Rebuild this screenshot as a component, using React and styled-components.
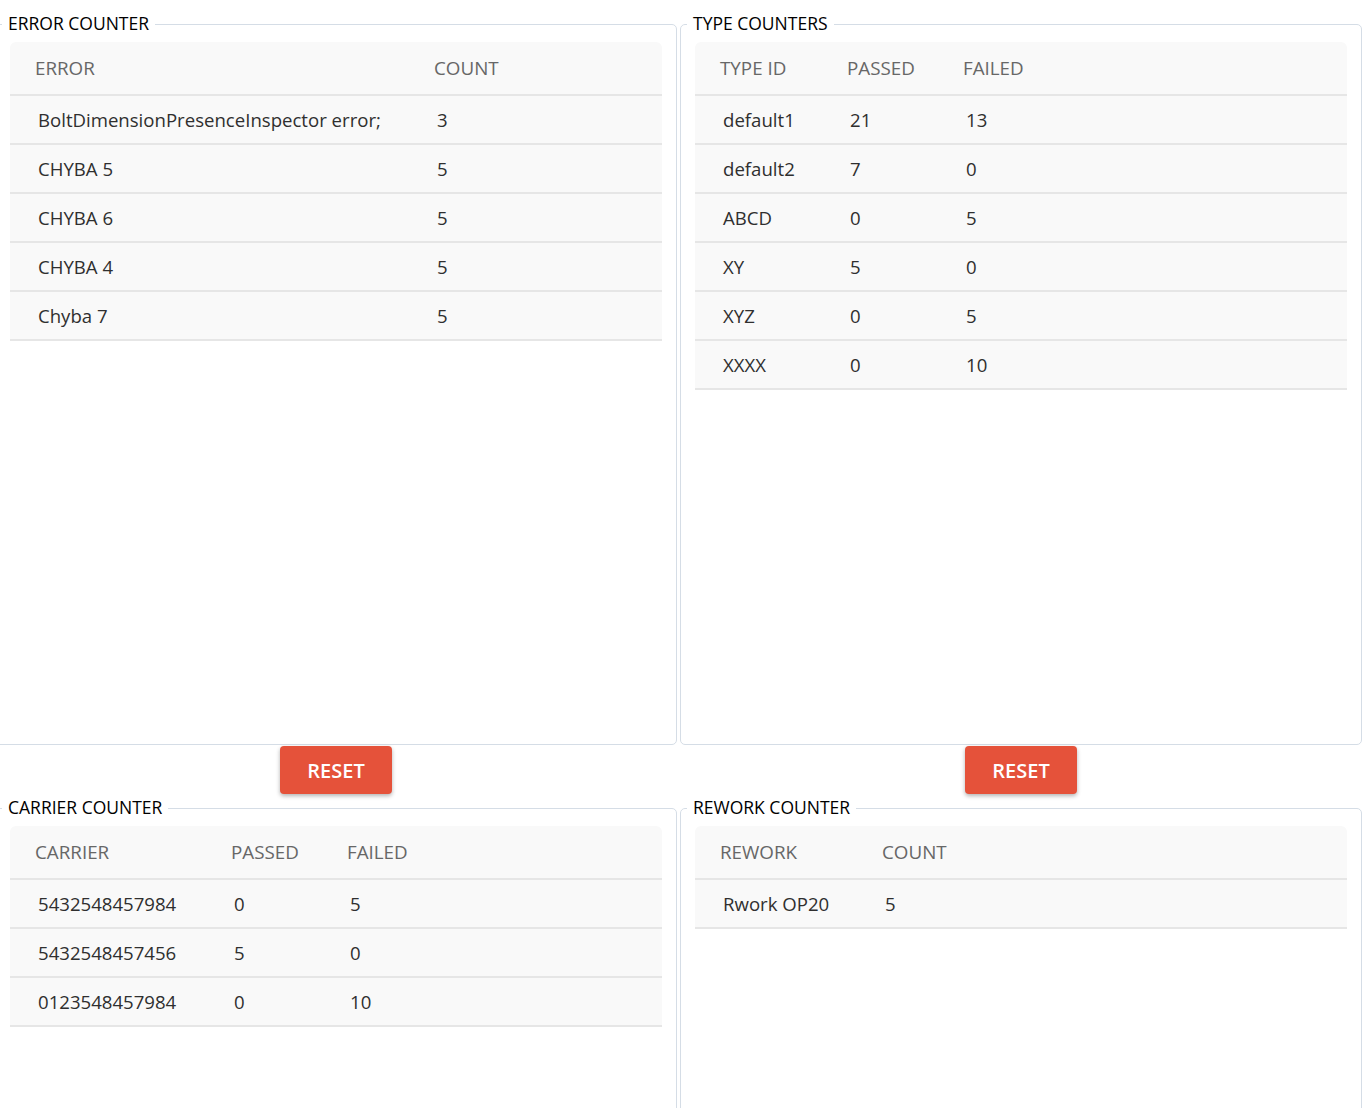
import React from "react"
import styled, { createGlobalStyle } from "styled-components"

const errors = [
  ["BoltDimensionPresenceInspector error;", "3"],
  ["CHYBA 5", "5"],
  ["CHYBA 6", "5"],
  ["CHYBA 4", "5"],
  ["Chyba 7", "5"],
]
const types = [
  ["default1", "21", "13"],
  ["default2", "7", "0"],
  ["ABCD", "0", "5"],
  ["XY", "5", "0"],
  ["XYZ", "0", "5"],
  ["XXXX", "0", "10"],
]
const carriers = [
  ["5432548457984", "0", "5"],
  ["5432548457456", "5", "0"],
  ["0123548457984", "0", "10"],
]
const reworks = [["Rwork OP20", "5"]]

function CounterTable({ cols, heads, rows }) {
  return (
    <Table>
      <HeadRow cols={cols}>
        {heads.map((h) => (
          <HeadCell key={h}>{h}</HeadCell>
        ))}
      </HeadRow>
      {rows.map((r, i) => (
        <Row key={i} cols={cols}>
          {r.map((c, j) => (
            <Cell key={j}>{c}</Cell>
          ))}
        </Row>
      ))}
    </Table>
  )
}

export default function App() {
  return (
    <>
      <GlobalStyle />
      <Page>
        <Column>
          <Box $tall>
            <Legend>ERROR COUNTER</Legend>
            <CounterTable
              cols="399px 114px 1fr"
              heads={["ERROR", "COUNT", ""]}
              rows={errors.map((r) => [...r, ""])}
            />
          </Box>
          <ButtonRow>
            <ResetButton>RESET</ResetButton>
          </ButtonRow>
          <Box>
            <Legend>CARRIER COUNTER</Legend>
            <CounterTable
              cols="196px 116px 110px 1fr"
              heads={["CARRIER", "PASSED", "FAILED", ""]}
              rows={carriers.map((r) => [...r, ""])}
            />
          </Box>
        </Column>
        <Column>
          <Box $tall>
            <Legend>TYPE COUNTERS</Legend>
            <CounterTable
              cols="127px 116px 110px 1fr"
              heads={["TYPE ID", "PASSED", "FAILED", ""]}
              rows={types.map((r) => [...r, ""])}
            />
          </Box>
          <ButtonRow>
            <ResetButton>RESET</ResetButton>
          </ButtonRow>
          <Box>
            <Legend>REWORK COUNTER</Legend>
            <CounterTable
              cols="162px 114px 1fr"
              heads={["REWORK", "COUNT", ""]}
              rows={reworks.map((r) => [...r, ""])}
            />
          </Box>
        </Column>
      </Page>
    </>
  )
}

const GlobalStyle = createGlobalStyle`
  body {
    margin: 0;
    background: #fff;
    font-family: "Open Sans", "Noto Sans", sans-serif;
    overflow: hidden;
  }
`
const Page = styled.div`
  display: grid;
  grid-template-columns: 682px 682px;
  column-gap: 3px;
  margin-left: -5px;
  padding-top: 13px;
`
const Column = styled.div`
  display: flex;
  flex-direction: column;
`
const Box = styled.fieldset`
  margin: 0;
  padding: 0 14px 14px;
  border: 1px solid #d5dde6;
  border-radius: 5px;
  height: ${(p) => (p.$tall ? "732px" : "400px")};
  box-sizing: border-box;
  min-width: 0;
`
const Legend = styled.legend`
  margin-left: -8px;
  padding: 0 6px 2px;
  font-size: 17.5px;
  line-height: 20px;
  font-weight: 500;
  color: #000;
`
const Table = styled.div`
  margin-top: 7px;
  background: #f9f9f9;
  border-radius: 6px 6px 0 0;
`
const HeadRow = styled.div`
  display: grid;
  grid-template-columns: ${(p) => p.cols};
  height: 54px;
  padding-bottom: 1px;
  box-sizing: border-box;
  align-items: center;
  border-bottom: 2px solid #e6e6e6;
`
const HeadCell = styled.div`
  padding-left: 25px;
  font-size: 18.8px;
  font-weight: 500;
  color: #676767;
  white-space: nowrap;
`
const Row = styled(HeadRow)`
  height: 49px;
  padding-bottom: 1px;
`
const Cell = styled.div`
  padding-left: 28px;
  font-size: 18.6px;
  font-weight: 500;
  color: #2f2f2f;
  white-space: nowrap;
`
const ButtonRow = styled.div`
  display: flex;
  justify-content: center;
  height: 52px;
  padding-top: 1px;
  box-sizing: border-box;
`
const ResetButton = styled.button`
  width: 112px;
  height: 48px;
  border: none;
  border-radius: 4px;
  background: #e5523a;
  color: #fff;
  font-family: "Open Sans", sans-serif;
  font-size: 20px;
  font-weight: 600;
  box-shadow: 0 2px 4px rgba(0, 0, 0, 0.3);
  cursor: pointer;
`
